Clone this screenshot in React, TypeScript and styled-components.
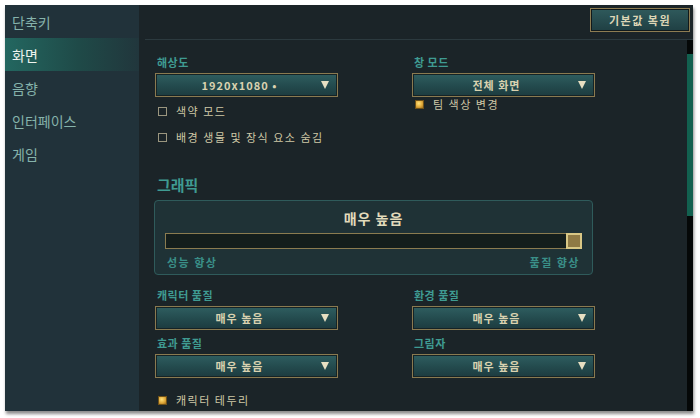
import React from "react";
import styled, { createGlobalStyle } from "styled-components";

const GlobalStyle = createGlobalStyle`
  html, body {
    margin: 0;
    padding: 0;
    background: #ffffff;
  }
  body {
    font-family: "Noto Sans CJK KR", "Noto Sans", sans-serif;
  }
`;

const Page = styled.div`
  width: 700px;
  height: 418px;
  padding: 5px 7px 7px 5px;
  box-sizing: border-box;
`;

const Frame = styled.div`
  display: flex;
  width: 688px;
  height: 406px;
  background: #1b2428;
  box-shadow: 1px 3px 3px rgba(0, 0, 0, 0.45);
  overflow: hidden;
`;

const Sidebar = styled.nav`
  width: 134px;
  flex-shrink: 0;
  display: flex;
  flex-direction: column;
  background: #21323a;
`;

const NavItem = styled.div<{ $active?: boolean }>`
  height: 33px;
  display: flex;
  align-items: center;
  padding-left: 7px;
  font-size: 14px;
  color: ${p => (p.$active ? "#eef3ee" : "#86b3ab")};
  background: ${p =>
    p.$active ? "linear-gradient(90deg, #236760 0%, #1f4a48 55%, #21363c 100%)" : "transparent"};
`;

const Main = styled.div`
  flex: 1;
  display: flex;
  flex-direction: column;
  min-width: 0;
`;

const TopBar = styled.div`
  height: 35px;
  display: flex;
  justify-content: flex-end;
  align-items: flex-start;
  padding: 3px 3px 0 0;
  box-sizing: border-box;
  border-bottom: 1px solid #2c3a3f;
  margin-left: 6px;
`;

const ResetButton = styled.div`
  width: 100px;
  height: 24px;
  display: flex;
  align-items: center;
  justify-content: center;
  box-sizing: border-box;
  border: 1px solid #8d7c52;
  box-shadow: inset 0 0 0 1px #10191b;
  background: linear-gradient(180deg, #2f5a5c 0%, #1f3f43 100%);
  color: #ddd6b6;
  font-size: 11px;
  font-weight: bold;
  letter-spacing: 1.5px;
`;

const Body = styled.div`
  flex: 1;
  display: flex;
  min-height: 0;
`;

const Content = styled.div`
  flex: 1;
  padding: 14px 0 0 16px;
  display: flex;
  flex-direction: column;
`;

const ScrollTrack = styled.div`
  width: 6px;
  background: #050808;
  display: flex;
  flex-direction: column;
`;

const ScrollThumb = styled.div`
  margin-top: 14px;
  height: 162px;
  background: #12604f;
`;

const Grid = styled.div`
  display: grid;
  grid-template-columns: 183px 183px;
  column-gap: 74px;
`;

const Column = styled.div`
  display: flex;
  flex-direction: column;
`;

const Label = styled.div`
  font-size: 11px;
  line-height: 16px;
  height: 16px;
  color: #3f9b92;
  font-weight: bold;
  letter-spacing: 0.5px;
  padding-left: 2px;
  margin-bottom: 3px;
`;

const Dropdown = styled.div`
  position: relative;
  height: 24px;
  box-sizing: border-box;
  border: 1px solid #8a7a50;
  box-shadow: inset 0 0 0 1px #152326;
  background: linear-gradient(180deg, #2f5e60 0%, #234a4d 55%, #1d3b3f 100%);
  display: flex;
  align-items: center;
  justify-content: center;
  color: #d9d2b0;
  font-size: 11px;
  font-weight: bold;
  letter-spacing: 1px;
  padding-right: 24px;
  padding-left: 10px;
`;

const Arrow = styled.span`
  position: absolute;
  right: 8px;
  top: 50%;
  transform: translateY(-50%);
  width: 0;
  height: 0;
  border-left: 4.5px solid transparent;
  border-right: 4.5px solid transparent;
  border-top: 8px solid #e6dfc2;
`;

const CheckRow = styled.div<{ $top: number }>`
  display: flex;
  align-items: center;
  gap: 9px;
  height: 16px;
  margin-top: ${p => p.$top}px;
  padding-left: 3px;
  color: #cfc8a6;
  font-size: 11px;
  letter-spacing: 1.5px;
`;

const Box = styled.span<{ $checked?: boolean }>`
  width: 9px;
  height: 9px;
  box-sizing: border-box;
  border: 1px solid ${p => (p.$checked ? "#6f5118" : "#9b967f")};
  background: ${p =>
    p.$checked ? "radial-gradient(circle at 40% 35%, #ffe27a 0%, #e0a93a 55%, #9c6b1a 100%)" : "transparent"};
`;

const Heading = styled.div`
  margin-top: 30px;
  font-size: 15px;
  line-height: 20px;
  color: #3f9b92;
  font-weight: bold;
  padding-left: 2px;
`;

const Panel = styled.div`
  margin-top: 5px;
  width: 439px;
  height: 75px;
  box-sizing: border-box;
  border: 1px solid #2f5b5b;
  border-radius: 4px;
  background: #1f3236;
  margin-left: -1px;
  padding: 7px 10px 0 10px;
  display: flex;
  flex-direction: column;
`;

const PanelTitle = styled.div`
  text-align: center;
  font-size: 14px;
  line-height: 20px;
  color: #e2dbbb;
  font-weight: bold;
  letter-spacing: 1px;
`;

const Track = styled.div`
  margin-top: 5px;
  height: 16px;
  box-sizing: border-box;
  border: 1px solid #8b7c50;
  background: #141e1c;
  display: flex;
  justify-content: flex-end;
`;

const Thumb = styled.div`
  width: 16px;
  height: 16px;
  margin-top: -1px;
  margin-right: -1px;
  box-sizing: border-box;
  border: 2px solid #d8c785;
  background: #8f7a45;
`;

const SliderLabels = styled.div`
  display: flex;
  justify-content: space-between;
  margin-top: 5px;
  padding: 0 2px;
  font-size: 11px;
  font-weight: bold;
  color: #3a8f88;
  letter-spacing: 1.5px;
`;

const QualityGrid = styled(Grid)`
  margin-top: 12px;
  row-gap: 5px;
`;

const Field: React.FC<{ label: string; value: string }> = ({ label, value }) => (
  <Column>
    <Label>{label}</Label>
    <Dropdown>
      {value}
      <Arrow />
    </Dropdown>
  </Column>
);

const menu = ["단축키", "화면", "음향", "인터페이스", "게임"];

const App: React.FC = () => {
  return (
    <Page>
      <GlobalStyle />
      <Frame>
        <Sidebar>
          {menu.map(item => (
            <NavItem key={item} $active={item === "화면"}>
              {item}
            </NavItem>
          ))}
        </Sidebar>
        <Main>
          <TopBar>
            <ResetButton>기본값 복원</ResetButton>
          </TopBar>
          <Body>
            <Content>
              <Grid>
                <Column>
                  <Label>해상도</Label>
                  <Dropdown>
                    1920x1080 •
                    <Arrow />
                  </Dropdown>
                  <CheckRow $top={6}>
                    <Box />
                    색약 모드
                  </CheckRow>
                  <CheckRow $top={10}>
                    <Box />
                    배경 생물 및 장식 요소 숨김
                  </CheckRow>
                </Column>
                <Column>
                  <Label>창 모드</Label>
                  <Dropdown>
                    전체 화면
                    <Arrow />
                  </Dropdown>
                  <CheckRow $top={-1}>
                    <Box $checked />
                    팀 색상 변경
                  </CheckRow>
                </Column>
              </Grid>
              <Heading>그래픽</Heading>
              <Panel>
                <PanelTitle>매우 높음</PanelTitle>
                <Track>
                  <Thumb />
                </Track>
                <SliderLabels>
                  <span>성능 향상</span>
                  <span>품질 향상</span>
                </SliderLabels>
              </Panel>
              <QualityGrid>
                <Field label="캐릭터 품질" value="매우 높음" />
                <Field label="환경 품질" value="매우 높음" />
                <Field label="효과 품질" value="매우 높음" />
                <Field label="그림자" value="매우 높음" />
              </QualityGrid>
              <CheckRow $top={14}>
                <Box $checked />
                캐릭터 테두리
              </CheckRow>
            </Content>
            <ScrollTrack>
              <ScrollThumb />
            </ScrollTrack>
          </Body>
        </Main>
      </Frame>
    </Page>
  );
};

export default App;
